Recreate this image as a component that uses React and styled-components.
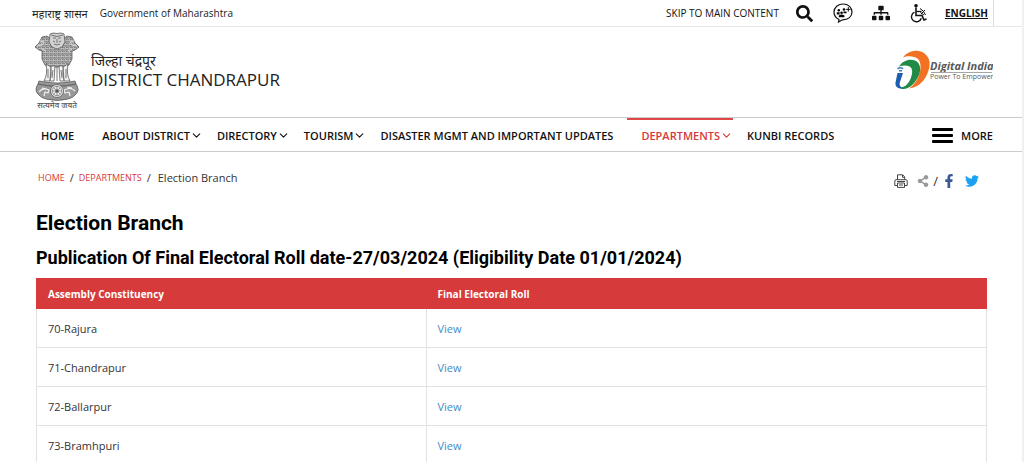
import React from "react";
import styled, { createGlobalStyle } from "styled-components";
import { FaSearch, FaSitemap, FaShareAlt, FaFacebookF, FaTwitter } from "react-icons/fa";
import { FiChevronDown } from "react-icons/fi";

const NAV_ITEMS = [
  { label: "Home" },
  { label: "About District", menu: true },
  { label: "Directory", menu: true },
  { label: "Tourism", menu: true },
  { label: "Disaster Mgmt and Important Updates" },
  { label: "Departments", menu: true, active: true },
  { label: "Kunbi Records" },
];

const ROWS = [
  "70-Rajura",
  "71-Chandrapur",
  "72-Ballarpur",
  "73-Bramhpuri",
];

const Emblem = () => (
  <svg width="46" height="78" viewBox="0 0 46 78" role="img" aria-label="State Emblem of India">
    <defs>
      <pattern id="mane" width="4" height="4" patternUnits="userSpaceOnUse">
        <rect width="4" height="4" fill="#bdbdbd" />
        <path d="M0 1l1 1.5L2.4 1 4 2.6M0 3.4l1.6.4L3 3" fill="none" stroke="#666" strokeWidth=".8" />
      </pattern>
    </defs>
    <g stroke="#5a5a5a" strokeWidth=".8" strokeLinejoin="round">
      <path
        d="M8 5l5-1 4 3 12 0 4-3 5 1 3 6 4 4-4 3-3 1 0 8-3 6-4 2H15l-4-2-3-6 0-8-3-1-4-3 4-4z"
        fill="url(#mane)"
      />
      <path d="M16 2l3-1 4 .5L27 1l3 1 1 8-3 5-5 2-5-2-3-5z" fill="#d2d2d2" />
      <path d="M19 6h3M24 6h3M23 7v4M20 12q3 2 6 0M17 3q6 3 12 0M19 9l2 1M27 9l-2 1" fill="none" />
      <path d="M6 9l4 1-2 3-5 1M40 9l-4 1 2 3 5 1M8 17l4 2M38 17l-4 2" fill="none" stroke="#eee" />
      <path d="M12 32l5 3-1 14h-6q4-7 2-17zM34 32l-5 3 1 14h6q-4-7-2-17z" fill="#eee" />
      <path d="M17 34h4l-1 15h-4q2-7 1-15zM29 34h-4l1 15h4q-2-7-1-15z" fill="#f7f7f7" />
      <path d="M14 37l0 9M19 38l-1 8M23 34v15M27 38l1 8M32 37l0 9" fill="none" />
      <path d="M5 49q18 4 36 0l1 3q-19 4-38 0z" fill="#999" />
      <path d="M4 52q-4 6 0 10 3 4 8 5 11 3 22 0 5-1 8-5 4-4 0-10-19 5-38 0z" fill="#989898" />
      <path
        d="M5 60q3-4 7-3l3 1-1 3-3-1-1 4M41 59q-4-4-8-2l-3 1 1 3 4-1 1 4M8 56l5 1M33 55l5 1"
        fill="none"
        stroke="#f0f0f0"
        strokeWidth="1.2"
      />
      <circle cx="23" cy="59" r="6.5" fill="#eee" />
      <circle cx="23" cy="59" r="4.8" fill="none" strokeWidth=".6" />
      <path
        d="M23 54v10M18 59h10M19.5 55.5l7 7M26.5 55.5l-7 7"
        fill="none"
        strokeWidth=".6"
      />
      <circle cx="23" cy="59" r="1.3" fill="#555" />
    </g>
    <text
      x="23"
      y="76"
      textAnchor="middle"
      fontFamily="'Noto Sans', 'FreeSans', sans-serif"
      fontSize="8"
      fontWeight="500"
      fill="#555"
    >
      सत्यमेव जयते
    </text>
  </svg>
);

const DigitalIndiaLogo = () => (
  <svg width="98" height="42" viewBox="0 0 98 42" role="img" aria-label="Digital India">
    <path
      d="M8 7.500C12 1.500 20-.5 26 1.500c7.500 3 10.500 10 7.500 19C30.500 31 23 37.500 14 38.500c5.500-4 9.500-10 11-17C26.500 14 25 9 20 7.200 16 5.800 11.500 5.700 8 7.500z"
      fill="#f37123"
    />
    <path
      d="M4 16.500c4-6.500 11-8 16-6 6.500 3 6.500 11 2.500 17.500-4 7-9 11-14 11-2 0-3.500-.7-3.500-1.500 5 0 9-4 11-10 2-5.500 1.500-9.500-1.500-11-3-1.500-7-1-10.500 0z"
      fill="#1f8b46"
    />
    <path d="M2.500 23h5.500L5 32c-1 3 0 5 3.500 6.500-5.500.5-8.500-1.500-8-6z" fill="#1c5fae" />
    <path d="M2.500 18.800q3-2 5.500 0M4 20.800h3" fill="none" stroke="#3c7ec0" strokeWidth="1.500" />
    <text
      x="35"
      y="20"
      fontFamily="'Open Sans', sans-serif"
      fontSize="11"
      fontWeight="700"
      fontStyle="italic"
      fill="#58595b"
    >
      Digital India
    </text>
    <path d="M36 22.500h61" stroke="#a5a5a5" strokeWidth="1" />
    <text x="35" y="29" fontFamily="'Open Sans', sans-serif" fontSize="7" fill="#58595b">
      Power To Empower
    </text>
  </svg>
);

const SocialIcon = () => (
  <svg width="20" height="20" viewBox="0 0 20 20" aria-hidden="true">
    <path
      d="M6 16.500l-.5 2.500 4-2.200c6 0 9.500-3.300 9.500-7.700C19 4.500 15.300 1 10.200 1S1 4.500 1 9.100c0 3.400 1.900 6 5 7.400z"
      fill="#fff"
      stroke="#111"
      strokeWidth="1.200"
    />
    <circle cx="5.800" cy="7.200" r="1.200" />
    <circle cx="11" cy="6.500" r="1.300" />
    <circle cx="8.600" cy="9.700" r="1.300" />
    <path d="M3.800 11.500V9.300h2.800v2.200zM10.500 10.300V8.500h3v1.800zM5.800 14.200V12.500q2.800-2 5.600 0v1.700z" />
    <path d="M15.300 4.200v4.400M13.100 6.400h4.400" stroke="#111" strokeWidth="1" />
  </svg>
);

const AccessIcon = () => (
  <svg width="17" height="20" viewBox="0 0 17 20" fill="none" stroke="#111" aria-hidden="true">
    <circle cx="6" cy="2.800" r="1.800" fill="#111" stroke="none" />
    <path d="M6 4.500v8h6l2 4.500 2.500-1" strokeWidth="1.600" />
    <path d="M6.500 8.500h5" strokeWidth="1.300" />
    <path d="M4.500 9.200a5 5 0 1 0 6.800 6" strokeWidth="1.400" />
    <path d="M10 5.500q4 2 5.500 6.500M10.500 9.500l3.500 2.500M15 7l-4 4" strokeWidth="1" />
  </svg>
);

const PrintIcon = () => (
  <svg width="14" height="14" viewBox="0 0 14 14" fill="none" stroke="#444" aria-hidden="true">
    <path d="M3.500 6V.8h5.200l2 2V6M8.500 1v2.300h2" />
    <path d="M3 11.500H.8V7q0-1.300 1.300-1.300h9.800q1.300 0 1.300 1.300v4.500H11" />
    <path d="M3.500 9h7v4.400h-7zM3 7.500h8M5 11h4" />
  </svg>
);

const App = () => {
  return (
    <>
      <GlobalStyle />
      <Page>
        <TopBar>
          <Government>
            <GovernmentLocal lang="mr">महाराष्ट्र शासन</GovernmentLocal>
            <span>Government of Maharashtra</span>
          </Government>
          <Tools>
            <SkipLink href="#content">Skip to main content</SkipLink>
            <IconRow>
              <IconButton type="button" aria-label="Search">
                <FaSearch size={17} />
              </IconButton>
              <IconButton type="button" aria-label="Social media links">
                <SocialIcon />
              </IconButton>
              <IconButton as="a" href="#sitemap" aria-label="Site map">
                <FaSitemap size={18} />
              </IconButton>
              <IconButton type="button" aria-label="Accessibility">
                <AccessIcon />
              </IconButton>
            </IconRow>
            <Language href="#english">English</Language>
          </Tools>
        </TopBar>

        <Header>
          <Brand href="#home">
            <Emblem />
            <BrandText>
              <BrandLocal lang="mr">जिल्हा चंद्रपूर</BrandLocal>
              <BrandName>District Chandrapur</BrandName>
            </BrandText>
          </Brand>
          <DigitalIndiaLogo />
        </Header>

        <Nav aria-label="Main">
          <NavList>
            {NAV_ITEMS.map((item) => (
              <li key={item.label}>
                <NavLink href="#" $active={item.active} $menu={item.menu}>
                  {item.label}
                  {item.menu && <FiChevronDown size={13} />}
                </NavLink>
              </li>
            ))}
          </NavList>
          <MoreButton type="button">
            <Burger>
              <span />
              <span />
              <span />
            </Burger>
            More
          </MoreButton>
        </Nav>

        <Content id="content">
          <PageTools>
            <Breadcrumb aria-label="Breadcrumb">
              <a href="#home">HOME</a>
              <span>/</span>
              <a href="#departments">DEPARTMENTS</a>
              <span>/</span>
              <Current>Election Branch</Current>
            </Breadcrumb>
            <Share>
              <ShareLink href="#print" aria-label="Print">
                <PrintIcon />
              </ShareLink>
              <ShareGroup>
                <ShareLink href="#share" aria-label="Share" $color="#999">
                  <FaShareAlt size={12} />
                </ShareLink>
                <Slash>/</Slash>
                <ShareLink href="#facebook" aria-label="Facebook" $color="#3b5998">
                  <FaFacebookF size={14} />
                </ShareLink>
              </ShareGroup>
              <ShareLink href="#twitter" aria-label="Twitter" $color="#1da1f2">
                <FaTwitter size={14} />
              </ShareLink>
            </Share>
          </PageTools>

          <Title>Election Branch</Title>
          <Subtitle>
            Publication Of Final Electoral Roll date-27/03/2024 (Eligibility Date 01/01/2024)
          </Subtitle>

          <Table>
            <thead>
              <tr>
                <th scope="col">Assembly Constituency</th>
                <th scope="col">Final Electoral Roll</th>
              </tr>
            </thead>
            <tbody>
              {ROWS.map((name) => (
                <tr key={name}>
                  <td>{name}</td>
                  <td>
                    <a href="#view">View</a>
                  </td>
                </tr>
              ))}
            </tbody>
          </Table>
        </Content>
      </Page>
    </>
  );
};

const GlobalStyle = createGlobalStyle`
  * {
    box-sizing: border-box;
  }

  html {
    overflow: hidden;
  }

  body {
    margin: 0;
    background: #fff;
    color: #333;
    font-family: "Open Sans", "Noto Sans", sans-serif;
    font-size: 11px;
  }

  a {
    text-decoration: none;
    color: inherit;
  }

  svg {
    flex: none;
    display: block;
  }
`;

const Page = styled.div`
  min-height: 100vh;
  border-right: 2px solid #f0f0f0;
`;

const TopBar = styled.div`
  height: 27px;
  display: flex;
  justify-content: space-between;
  padding: 0 28px 0 32px;
  border-bottom: 1px solid #e8e8e8;
  color: #222;
  font-size: 10px;
`;

const Government = styled.div`
  display: flex;
  align-items: center;
  gap: 12px;
`;

const GovernmentLocal = styled.span`
  font-size: 11px;
`;

const Tools = styled.div`
  display: flex;
  align-items: center;
  gap: 16px;
  padding-right: 5px;
  border-right: 1px solid #ddd;
`;

const SkipLink = styled.a`
  color: #111;
  text-transform: uppercase;
`;

const IconRow = styled.div`
  display: flex;
  align-items: center;
  gap: 18px;
`;

const IconButton = styled.button`
  width: 20px;
  padding: 0;
  border: 0;
  display: flex;
  justify-content: center;
  background: none;
  color: #111;
  cursor: pointer;
`;

const Language = styled.a`
  color: #111;
  font-weight: 700;
  text-transform: uppercase;
  text-decoration: underline;
`;

const Header = styled.header`
  height: 91px;
  display: flex;
  align-items: center;
  justify-content: space-between;
  padding: 0 29px 2px 34px;
  border-bottom: 1px solid #ccc;
`;

const Brand = styled.a`
  display: flex;
  align-items: center;
  gap: 11px;
  color: #222;
`;

const BrandText = styled.span`
  display: flex;
  flex-direction: column;
`;

const BrandLocal = styled.span`
  font-size: 14px;
  line-height: 18px;
`;

const BrandName = styled.span`
  font-size: 17px;
  line-height: 20px;
  text-transform: uppercase;
`;

const Nav = styled.nav`
  height: 34px;
  display: flex;
  justify-content: space-between;
  padding: 0 29px 0 27px;
  border-bottom: 1px solid #ccc;
`;

const NavList = styled.ul`
  display: flex;
  margin: 0;
  padding: 0;
  list-style: none;
`;

const NavLink = styled.a`
  height: 100%;
  display: flex;
  align-items: center;
  padding: 0 ${(props) => (props.$menu ? "0" : "14px")} 1px 14px;
  border-top: 2px solid ${(props) => (props.$active ? "#e04848" : "transparent")};
  color: ${(props) => (props.$active ? "#d63a3a" : "#111")};
  font-weight: 600;
  text-transform: uppercase;
  white-space: nowrap;
`;

const MoreButton = styled.button`
  display: flex;
  align-items: center;
  gap: 8px;
  padding: 2px 0 0;
  border: 0;
  background: none;
  color: #111;
  font: inherit;
  font-weight: 600;
  text-transform: uppercase;
  cursor: pointer;
`;

const Burger = styled.span`
  width: 21px;
  display: grid;
  gap: 3px;

  span {
    height: 3px;
    border-radius: 1px;
    background: #000;
  }
`;

const Content = styled.main`
  padding: 15px 35px 0 36px;
`;

const PageTools = styled.div`
  display: flex;
  justify-content: space-between;
  align-items: flex-start;
`;

const Breadcrumb = styled.nav`
  height: 20px;
  display: flex;
  align-items: center;
  gap: 5px;
  padding-left: 2px;

  a {
    color: #d63a3a;
    font-size: 9px;
  }
`;

const Current = styled.span`
  margin-left: 2px;
`;

const Share = styled.div`
  height: 28px;
  display: flex;
  align-items: center;
  gap: 9px;
  padding-right: 8px;
`;

const ShareGroup = styled.div`
  display: flex;
  align-items: center;
  gap: 4px;
`;

const ShareLink = styled.a`
  color: ${(props) => props.$color || "#444"};
`;

const Slash = styled.span`
  font-size: 13px;
`;

const Title = styled.h1`
  margin: 14px 0 0;
  color: #000;
  font-family: Roboto, sans-serif;
  font-size: 21px;
  font-weight: 700;
  line-height: 28px;
`;

const Subtitle = styled.h2`
  margin: 9px 0 8px;
  color: #000;
  font-family: Roboto, sans-serif;
  font-size: 18px;
  font-weight: 700;
  line-height: 24px;
`;

const Table = styled.table`
  width: 100%;
  border-collapse: collapse;
  table-layout: fixed;

  th,
  td {
    padding: 0 11px;
    border: 1px solid #e2e2e2;
    text-align: left;
  }

  th {
    height: 30px;
    border-color: #d63a3a;
    background: #d63a3a;
    color: #fff;
    font-size: 10px;
    font-weight: 700;
  }

  th:first-child {
    width: 41%;
  }

  td {
    height: 39px;
  }

  td a {
    color: #428bca;
  }
`;

export default App;
